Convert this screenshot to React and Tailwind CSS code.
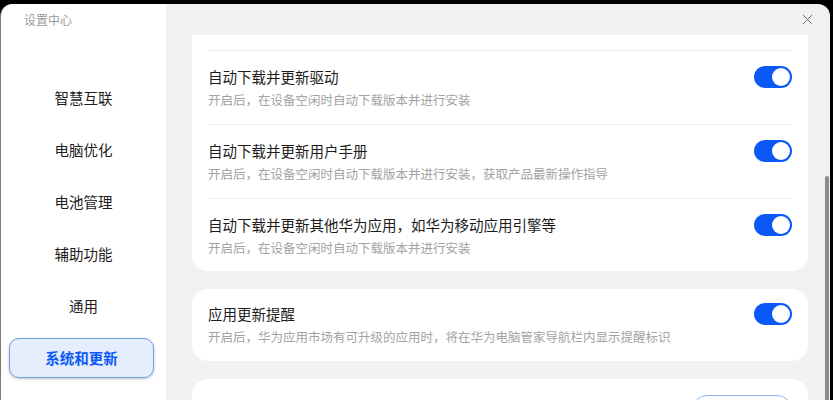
import { X } from "lucide-react";

const font = { fontFamily: '"Noto Sans CJK SC", "Noto Sans", sans-serif' };

const navItems = ["智慧互联", "电脑优化", "电池管理", "辅助功能", "通用", "系统和更新"];
const active = "系统和更新";

function Toggle() {
  return (
    <div className="mt-[-1px] flex h-[22px] w-[38px] shrink-0 items-center justify-end rounded-full bg-[#0a59f7] pr-[2px]">
      <div className="h-[18px] w-[18px] rounded-full bg-white" />
    </div>
  );
}

function Row({ title, desc, last = false }) {
  return (
    <div className={`flex items-start justify-between pt-[16px] ${last ? "h-[72px]" : "h-[74px] border-b border-[#ececec]"}`}>
      <div className="flex flex-col gap-[4px]">
        <div className="text-[14.5px] leading-[20px] text-[#1c1c1c]">{title}</div>
        <div className="text-[12.5px] leading-[18px] text-[#a3a3a3]">{desc}</div>
      </div>
      <Toggle />
    </div>
  );
}

export default function App() {
  return (
    <div className="h-[400px] w-[833px] overflow-hidden bg-black pt-[4px]" style={font}>
      <div className="flex h-[420px] w-[830px] overflow-hidden rounded-t-[12px] border-l border-[#7a7a7a]">
        <aside className="flex w-[165px] shrink-0 flex-col bg-white">
          <div className="flex h-[31px] items-center px-[23px] text-[12px] text-[#9a9a9a]">设置中心</div>
          <nav className="mt-[37px] flex flex-col">
            {navItems.map((n) =>
              n === active ? (
                <div key={n} className="flex h-[52px] items-center pl-[8px] pr-[12px]">
                  <div className="flex h-[40px] w-full items-center justify-center rounded-[10px] border-[1.5px] border-[#6f9fe4] bg-[#e6eefd] text-[14.5px] font-bold text-[#0a59f7] shadow-[0_1px_3px_rgba(0,0,0,0.25)]">
                    {n}
                  </div>
                </div>
              ) : (
                <div key={n} className="flex h-[52px] items-center justify-center text-[14.5px] text-[#1c1c1c]">
                  {n}
                </div>
              )
            )}
          </nav>
        </aside>

        <main className="flex min-w-0 flex-1 flex-col bg-[#f1f2f4]">
          <div className="flex h-[31px] shrink-0 items-center justify-end pr-[9px]">
            <X size={17} strokeWidth={1.3} className="text-[#666]" />
          </div>
          <div className="flex flex-col gap-[18px] pl-[26px] pr-[17px]">
            <div className="rounded-b-[16px] bg-white px-[16px]">
              <div className="h-[16px] border-b border-[#ececec]" />
              <Row title="自动下载并更新驱动" desc="开启后，在设备空闲时自动下载版本并进行安装" />
              <Row title="自动下载并更新用户手册" desc="开启后，在设备空闲时自动下载版本并进行安装，获取产品最新操作指导" />
              <Row title="自动下载并更新其他华为应用，如华为移动应用引擎等" desc="开启后，在设备空闲时自动下载版本并进行安装" last />
            </div>
            <div className="h-[72px] rounded-[16px] bg-white px-[16px]">
              <div className="flex h-[72px] items-start justify-between pt-[15px]">
                <div className="flex flex-col gap-[4px]">
                  <div className="text-[14.5px] leading-[20px] text-[#1c1c1c]">应用更新提醒</div>
                  <div className="text-[12.5px] leading-[18px] text-[#a3a3a3]">
                    开启后，华为应用市场有可升级的应用时，将在华为电脑管家导航栏内显示提醒标识
                  </div>
                </div>
                <Toggle />
              </div>
            </div>
            <div className="h-[72px] rounded-[16px] bg-white px-[16px]">
              <div className="flex justify-end pt-[16px]">
                <div className="h-[30px] w-[100px] rounded-full border-[1.5px] border-[#8ab8f0] bg-white" />
              </div>
            </div>
          </div>
        </main>

        <div className="flex w-[5px] shrink-0 flex-col bg-[#eef0f2]">
          <div className="mt-[172px] h-[260px] w-[4px] rounded-t-full bg-[#8c8c8c]" />
        </div>
      </div>
    </div>
  );
}
